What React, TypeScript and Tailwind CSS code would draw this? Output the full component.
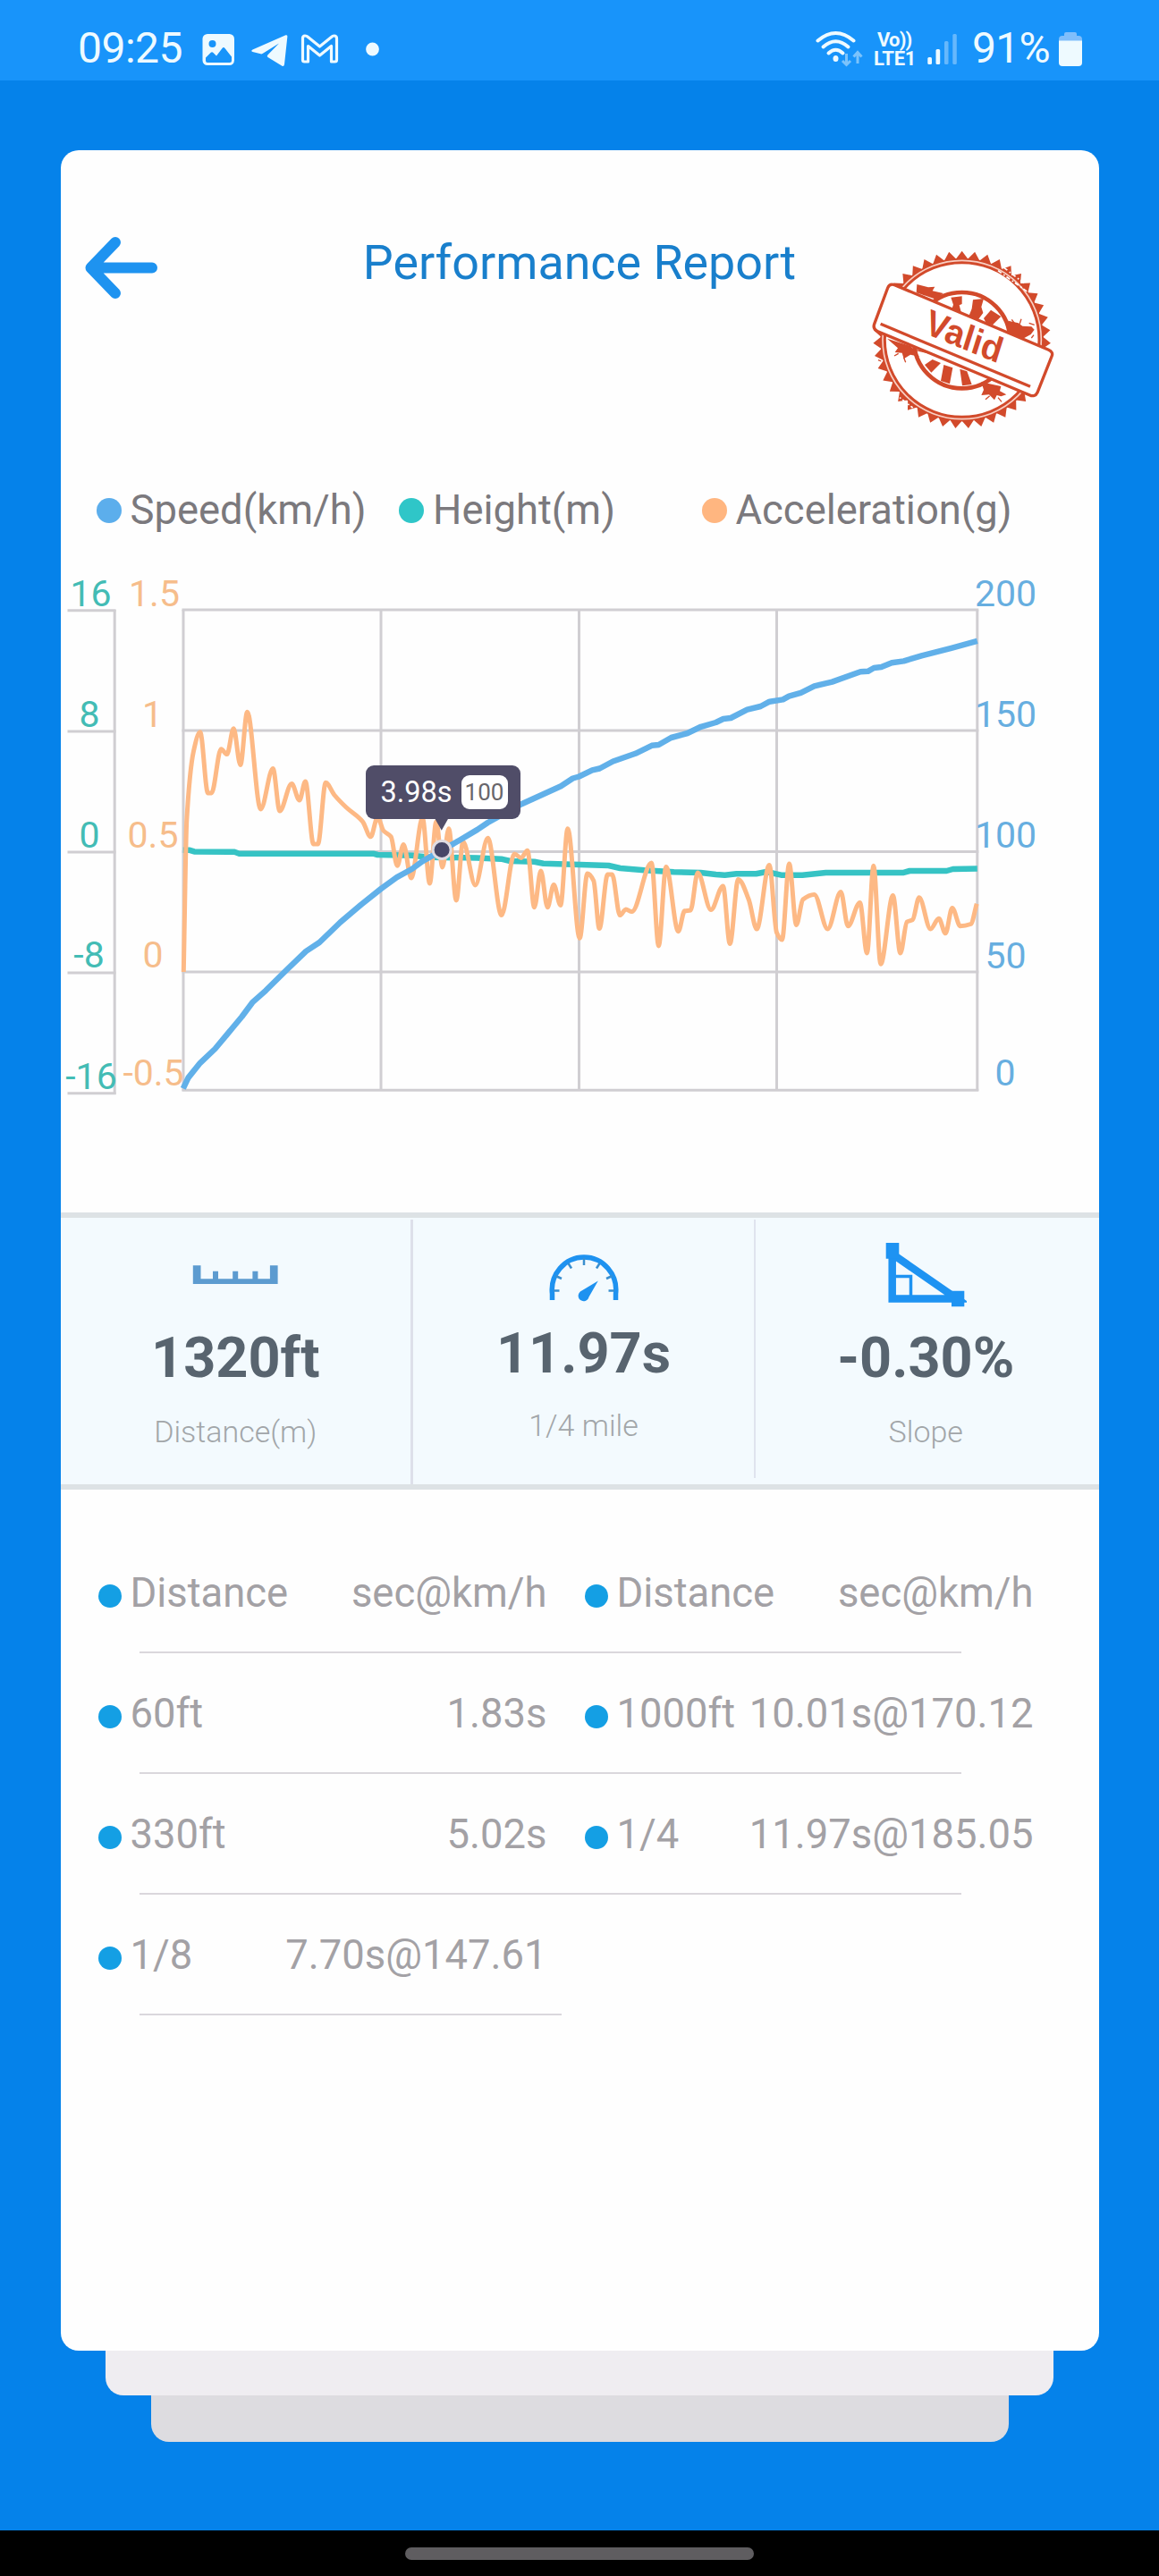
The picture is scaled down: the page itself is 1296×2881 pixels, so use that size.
type Point = [number, number];

type Split = { label: string; value: string };

const SPEED: Point[] = [
  [204.3, 1217.3], [210, 1205.4], [223.3, 1188.8], [240, 1173], [260, 1149], [270, 1137],
  [281.7, 1121.2], [296.7, 1107.8], [320, 1084.8], [341.7, 1063.9], [356.7, 1054], [380, 1031.5],
  [403.3, 1011.7], [425.7, 993.9], [443.3, 981.2], [460, 972], [471.7, 963.4], [493.3, 951.2],
  [513.3, 939.7], [533.3, 927.9], [545, 920], [583.3, 899], [626.7, 879.2], [640, 870.5],
  [647, 868.5], [661.7, 861.4], [670, 859.5], [685, 851.5], [710, 842.8], [728.3, 833.8],
  [736, 833], [750, 825], [768.3, 820], [783.3, 812.8], [800, 808], [808.3, 804],
  [816.7, 803], [835, 793.7], [850, 790], [860, 784.7], [875, 782.4], [881.7, 778.6],
  [895, 774.8], [910, 767.3], [930, 762.6], [961.7, 751.2], [970, 750.8], [976.7, 747],
  [985, 746], [996.7, 741.3], [1010, 739.4], [1030, 733.3], [1063.3, 724.8], [1092.3, 716.8],
];

const HEIGHT: Point[] = [
  [204.3, 950.8], [211.7, 950.8], [216.7, 952.4], [261.7, 952.8], [267, 954.7], [416.7, 954.7],
  [421.7, 956], [460, 956.7], [480, 958.7], [533, 959.5], [560, 960.7], [570, 963],
  [597, 963.8], [607, 965.8], [680, 968], [693, 971], [720, 973.3], [753, 975.3],
  [783, 976], [800, 978], [810, 978.7], [823, 977.3], [845, 977.3], [856.7, 975],
  [873, 978.7], [896.7, 978.7], [923, 975.9], [1010, 975.9], [1016.7, 974], [1058, 974],
  [1065, 972], [1092.3, 971.6],
];

const ACCELERATION: Point[] = [
  [204.8, 1087], [208.3, 917], [216, 840], [223.3, 818.7], [232, 887], [236, 887],
  [246.7, 837.7], [253.3, 843.6], [260.7, 814.8], [268.3, 855.5], [276, 796.2], [291, 905],
  [304.7, 859.5], [312.3, 907], [325.7, 876.5], [334.3, 895], [341, 874], [350, 944],
  [355, 944], [363.7, 875.3], [373.3, 889], [386.7, 903], [405, 918.8], [414, 935.8],
  [421.7, 914], [428.3, 929], [436.7, 935.8], [443.7, 968.2], [450.7, 944.5], [459.3, 982],
  [472, 915], [480, 988], [487.3, 919], [494.3, 970], [501.3, 926.7], [509.7, 1007],
  [517.3, 941.3], [531, 990], [545, 937.3], [560.3, 1023.6], [574.7, 955], [582.3, 959.5],
  [589.3, 951.2], [597, 1014.8], [604.3, 974], [611.7, 1014.8], [618.7, 989.5], [626.3, 1012.5],
  [634.3, 926.7], [647.7, 1049.3], [656.3, 977], [663.3, 985], [669.7, 1038.6], [679, 978],
  [684, 978], [692.7, 1023.6], [699.3, 1017], [706, 1019.6], [728, 965], [736, 1058],
  [744.3, 969.4], [758, 1041.7], [765, 1018.8], [771.7, 1018], [779.7, 976], [794.5, 1017.5],
  [808, 991], [815.7, 1055.6], [825, 983.4], [836.7, 1006], [845.7, 1039], [859.7, 967.4],
  [868, 1043], [874, 1051], [882, 966], [890, 1034.4], [897.3, 1006], [910, 1000.4],
  [925, 1039], [939.7, 997.6], [947.7, 1035.8], [961, 1009.4], [969, 1066], [976.3, 968.3],
  [984.3, 1078.3], [998, 1001.4], [1006.3, 1066], [1013.7, 1031], [1020, 1028.7], [1027.3, 1003.7],
  [1040, 1039], [1049.3, 1027.3], [1056.7, 1043.8], [1064.3, 1015.5], [1073.3, 1035.8], [1085, 1033.5],
  [1091.7, 1010.8],
];

const GRID_X = [204.5, 425.5, 647, 868, 1092.3];
const GRID_Y = [682, 817, 952.4, 1087, 1219.3];
const SIDE_Y = [682.7, 818, 953, 1088, 1222.8];

const HEIGHT_TICKS = [
  { text: "16", x: 101, y: 678 },
  { text: "8", x: 99.5, y: 812.5 },
  { text: "0", x: 99.5, y: 947.6 },
  { text: "-8", x: 99, y: 1082 },
  { text: "-16", x: 101.5, y: 1217.7 },
];

const ACCELERATION_TICKS = [
  { text: "1.5", x: 172, y: 678 },
  { text: "1", x: 170, y: 812.5 },
  { text: "0.5", x: 170.5, y: 947.6 },
  { text: "0", x: 170.5, y: 1082 },
  { text: "-0.5", x: 171, y: 1213.7 },
];

const SPEED_TICKS = [
  { text: "200", x: 1124, y: 677.6 },
  { text: "150", x: 1124, y: 812.6 },
  { text: "100", x: 1124, y: 948 },
  { text: "50", x: 1124, y: 1082.5 },
  { text: "0", x: 1123.5, y: 1213.7 },
];

const SPLITS: [Split, Split?][] = [
  [{ label: "Distance", value: "sec@km/h" }, { label: "Distance", value: "sec@km/h" }],
  [{ label: "60ft", value: "1.83s" }, { label: "1000ft", value: "10.01s@170.12" }],
  [{ label: "330ft", value: "5.02s" }, { label: "1/4", value: "11.97s@185.05" }],
  [{ label: "1/8", value: "7.70s@147.61" }],
];

const toLine = (points: Point[]) => "M" + points.map((p) => p.join(" ")).join("L");

/** Monotone cubic through the samples: flat at every peak and trough. */
function toCurve(points: Point[]) {
  const slope = (a: Point, b: Point) => (b[1] - a[1]) / (b[0] - a[0]);
  const tangents = points.map((p, i) => {
    if (i === 0) return slope(p, points[1]);
    if (i === points.length - 1) return slope(points[i - 1], p);
    const before = slope(points[i - 1], p);
    const after = slope(p, points[i + 1]);
    return before * after <= 0 ? 0 : (2 * before * after) / (before + after);
  });
  let d = `M${points[0][0]} ${points[0][1]}`;
  for (let i = 1; i < points.length; i++) {
    const [x0, y0] = points[i - 1];
    const [x1, y1] = points[i];
    const h = (x1 - x0) / 3;
    d += `C${x0 + h} ${y0 + h * tangents[i - 1]} ${x1 - h} ${y1 - h * tangents[i]} ${x1} ${y1}`;
  }
  return d;
}

function toothedRing(cx: number, cy: number, inner: number, outer: number, teeth: number) {
  const points: string[] = [];
  for (let i = 0; i < teeth * 2; i++) {
    const r = i % 2 ? inner : outer;
    const a = (i * Math.PI) / teeth - Math.PI / 2;
    points.push(`${(cx + r * Math.cos(a)).toFixed(1)},${(cy + r * Math.sin(a)).toFixed(1)}`);
  }
  return points.join(" ");
}

function StatusBar() {
  return (
    <header className="flex h-[90px] shrink-0 items-start bg-[#1894fa] pt-[26px] pl-[87px] text-[48px] leading-[56px] text-[#eefaff]">
      <span className="w-[137px] tracking-[-0.5px]">09:25</span>
      <svg viewBox="226 32 200 46" className="mt-1.5 ml-0.5 h-[46px] w-[200px]">
        <rect x="226.5" y="38" width="35.5" height="35" rx="5.5" fill="currentColor" />
        <circle cx="237.5" cy="49" r="4" fill="#1894fa" />
        <path
          d="M230 64.5l5.5-5.5q1.5-1.5 3 0l3.5 3.5l6.5-8.5q1.5-2 3 0l7.5 9.5V68q0 2-2 2H232q-2 0-2-2z"
          fill="#1894fa"
        />
        <path
          d="M282.5 55.5L319.5 39.3q2-.6 1.9 1.5L318 72q-.5 3-3 1.5L299.5 64q-1.5-1-.2-2.5L312 48.5L293.5 60q-1 .6-2 .3L282.5 58q-2.5-1 0-2.5z"
          fill="currentColor"
        />
        <path
          d="M338.5 42v25q0 2 2 2h4V51.5L357.5 62L370.5 51.5V69h4q2 0 2-2V43q0-3-3-3q-1.5 0-3 1.5L357.5 52L344.5 41.5Q343 40 341 40q-2.5 0-2.5 3z"
          fill="none"
          stroke="currentColor"
          strokeWidth="3.2"
          strokeLinejoin="round"
        />
        <circle cx="416.5" cy="55" r="7.4" fill="currentColor" />
      </svg>
      <svg viewBox="910 32 56 46" className="mt-1.5 ml-[484px] h-[46px] w-[56px]">
        <g fill="none" stroke="currentColor" strokeWidth="4" strokeLinecap="round">
          <path d="M914.5 45.5Q934.5 28.5 954.5 45.5" />
          <path d="M920.5 52.5Q934.5 40 948.5 52.5" />
          <path d="M926.5 59.5Q934.5 52 942.5 59.5" />
        </g>
        <ellipse cx="934.5" cy="65.5" rx="3" ry="3.5" fill="currentColor" />
        <path
          d="M946.5 60v12M942 68l4.5 4.5L951 68M959 71V59M954.5 63.5L959 58.5L963.5 63.5"
          fill="none"
          stroke="#7cc3fb"
          strokeWidth="3"
        />
      </svg>
      <div className="ml-[11px] flex w-[49px] flex-col pt-[8px] text-[22px] leading-[21px] font-bold">
        <span className="pl-1 tracking-[-0.8px] whitespace-nowrap">Vo))</span>
        <span className="tracking-[-0.2px]">LTE1</span>
      </div>
      <svg viewBox="1036 36 36 38" className="mt-[10px] ml-[10px] h-[38px] w-[36px]">
        <rect x="1037.3" y="64" width="4.7" height="8" rx="1.5" fill="currentColor" />
        <rect x="1046.5" y="55" width="4.7" height="17" rx="1.5" fill="currentColor" />
        <rect x="1056" y="46" width="4.5" height="26" rx="1.5" fill="#66b8fc" />
        <rect x="1065.3" y="38" width="4.5" height="34" rx="1.5" fill="#66b8fc" />
      </svg>
      <span className="ml-[15px] w-[97px] tracking-[-0.7px]">91%</span>
      <svg viewBox="1184 36 26 38" className="mt-[10px] h-[38px] w-[26px]">
        <path d="M1190 40v-2q0-2 2-2h10q2 0 2 2v2h2q4 0 4 4v4h-26v-4q0-4 4-4z" fill="#7fbefb" />
        <path d="M1184 45.5h26V70q0 4-4 4h-18q-4 0-4-4z" fill="currentColor" />
      </svg>
    </header>
  );
}

function ValidStamp() {
  return (
    <svg viewBox="0 0 780 750" className="mt-[82px] h-[250px] w-[260px]">
      <polygon points={toothedRing(407, 390, 272, 298, 43)} fill="#d24a2b" />
      <circle cx="407" cy="390" r="271" fill="#f9cfc3" stroke="#d24a2b" strokeWidth="5" />
      <circle cx="407" cy="390" r="259" fill="#fff" stroke="#d24a2b" strokeWidth="9" />
      <path d="M528 158l100 72M548 148l72 56M180 570l62 48" stroke="#fff" strokeWidth="5" strokeDasharray="14 9 5 7" />
      <circle cx="407" cy="392" r="161" fill="none" stroke="#d24a2b" strokeWidth="14" />
      <g fill="#d24a2b">
        <path d="M370 248l37-4v26l-9 4l8 30l-34-14l6-18zM444 256l36-4l-8 28l6 20l-18 24l-32-8l12-30zM504 290l34 22l-28 28l-22-6l-8-16z" />
        <path d="M282 474l26-18l28 12l-32 32zM346 474l30 10l-10 54l-30-10zM400 488l24 8l16 44l-32 4z" />
        <path d="M256 204l38 10l22-2l-8 14l36 8l-24 20l-66-22zM562 326l34 8l14 10l30 2l10 10l-12 16l-26 14l-54-22z" />
        <path d="M156 386l80 26l28 34l-30-6l-22 14l-6-20l-24-2l10-14zM472 532l66 14l-4 16l22 12l-18 6l-14-4l-8 16l-18-18l-26 2l8-18z" />
      </g>
      <path
        d="M574 322l10 14M606 320l-6 18M632 334l18 6M640 384l8-10M262 226l20 14M180 444l14-8M212 450l6 16M250 424l62 14M486 590l14-12M540 598l-12-14M126 458l10 4M158 520l8 6"
        stroke="#d24a2b"
        strokeWidth="4"
      />
      <path
        d="M181 206L696 423Q715 431 708 446L660 567Q652 584 633 575L125 362Q107 354 113 337L158 216Q164 200 181 206z"
        fill="#fff"
        stroke="#d24a2b"
        strokeWidth="10"
      />
      <path d="M134 337L636 547" stroke="#d24a2b" strokeWidth="10" />
      <text
        transform="translate(277 366) rotate(22.5) skewX(5)"
        textLength="272"
        lengthAdjust="spacingAndGlyphs"
        className="fill-[#d24a2b] font-['Liberation_Sans',sans-serif] text-[120px] font-bold"
      >
        Valid
      </text>
    </svg>
  );
}

function ReportHeader() {
  return (
    <div className="grid h-[374px] grid-cols-[260px_1fr_260px] px-[28.5px]">
      <svg viewBox="94 260 84 80" className="mt-[92px] -ml-0.5 h-[80px] w-[84px]">
        <path
          d="M170 299.5H103M129 271L101.5 299.5L129 328"
          fill="none"
          stroke="#1e93f0"
          strokeWidth="12"
          strokeLinecap="round"
          strokeLinejoin="round"
        />
      </svg>
      <h1 className="mt-[94px] text-center text-[53.8px] leading-[64px] whitespace-nowrap text-[#197fcc]">
        Performance Report
      </h1>
      <ValidStamp />
    </div>
  );
}

function Legend() {
  return (
    <ul className="grid h-[58px] grid-cols-[338.5px_338.5px_auto] pl-[40px] text-[45.4px] leading-[54px] text-[#7b797d]">
      <li className="flex items-center gap-[10px]">
        <span className="size-[28px] rounded-full bg-[#5caeec]" />
        Speed(km/h)
      </li>
      <li className="flex items-center gap-[10px]">
        <span className="size-[28px] rounded-full bg-[#2fc6c8]" />
        Height(m)
      </li>
      <li className="flex items-center gap-[10px]">
        <span className="size-[28px] rounded-full bg-[#ffb680]" />
        Acceleration(g)
      </li>
    </ul>
  );
}

function Chart() {
  return (
    <div className="relative h-[756px]">
      <svg viewBox="67.5 600 1161 756" className="h-[756px] w-[1161px] text-[41px]">
        <g stroke="#d0ced2" strokeWidth="3">
          {SIDE_Y.map((y) => (
            <path key={y} d={`M75 ${y}H129`} />
          ))}
          <path d="M127.7 682V1224" />
          {GRID_Y.map((y) => (
            <path key={y} d={`M203 ${y}H1093.8`} />
          ))}
          {GRID_X.map((x) => (
            <path key={x} d={`M${x} 682V1220`} />
          ))}
        </g>
        <g textAnchor="middle" fill="#43bcb5">
          {HEIGHT_TICKS.map((t) => (
            <text key={t.text} x={t.x} y={t.y}>{t.text}</text>
          ))}
        </g>
        <g textAnchor="middle" fill="#f6bd8b">
          {ACCELERATION_TICKS.map((t) => (
            <text key={t.text} x={t.x} y={t.y}>{t.text}</text>
          ))}
        </g>
        <g textAnchor="middle" fill="#67aee0">
          {SPEED_TICKS.map((t) => (
            <text key={t.text} x={t.x} y={t.y}>{t.text}</text>
          ))}
        </g>
        <g fill="none" strokeLinejoin="round">
          <path d={toLine(HEIGHT)} stroke="#36c3c4" strokeWidth="6.5" />
          <path d={toCurve(ACCELERATION)} stroke="#fdb985" strokeWidth="5" />
          <path d={toLine(SPEED)} stroke="#61b0e9" strokeWidth="6.5" />
        </g>
        <path d="M485.5 915H501L493.3 928.7z" fill="#504d68" />
        <circle cx="493.6" cy="950.4" r="10" fill="#474767" stroke="#dfdce2" strokeWidth="3" />
      </svg>
      <div className="absolute top-[256px] left-[341px] flex h-[60px] w-[173px] items-center rounded-[9px] bg-[#504d68] pl-[17px] text-[32.5px] text-white">
        <span className="w-[90px]">3.98s</span>
        <span className="mb-px flex h-[38px] w-[52px] items-center justify-center rounded-[9px] bg-white text-[26px] leading-none text-[#68666b]">
          100
        </span>
      </div>
    </div>
  );
}

const RulerIcon = () => (
  <svg viewBox="215 1414 96 24" className="h-[24px] w-[96px]">
    <path
      d="M215.8 1415.3h8.7v15h13.5v-8.6h6v8.6h16.2v-8.6h6v8.6h16.2v-8.6h6v8.6h13.5v-15h8.7v20.7h-94.8z"
      fill="#5c9bd0"
    />
  </svg>
);

const GaugeIcon = () => (
  <svg viewBox="612 1402 80 54" className="h-[54px] w-[80px]">
    <path
      d="M616.5 1454V1447C614 1426 630 1406 652 1406S690 1426 687.5 1447V1454"
      fill="none"
      stroke="#1e92f0"
      strokeWidth="5.5"
    />
    <path
      d="M618 1443.5h6.5M620.5 1427l6.5 3M634.5 1413l3.5 5.5M652 1407v8M669.5 1413l-3.5 5.5M683.5 1427l-6.5 3M686 1443.5h-6.5"
      stroke="#3a8fcf"
      strokeWidth="2.5"
    />
    <path d="M667.8 1432.5L657.5 1450.5A6 6 0 1 1 649.5 1443.6z" fill="#1e92f0" />
  </svg>
);

const SlopeIcon = () => (
  <svg viewBox="990 1388 92 76" className="h-[76px] w-[92px]">
    <path d="M1001 1404L1071 1452.5H998.7V1402" fill="none" stroke="#1e93f2" strokeWidth="8.5" />
    <path d="M1002 1427.5H1019.5V1449" fill="none" stroke="#1e93f2" strokeWidth="3.5" />
    <path d="M991.7 1390h14.6v17.7h-14.6zM1065 1443.7h14.3v17.6h-14.3z" fill="#1e93f2" />
  </svg>
);

function Stats() {
  return (
    <section className="grid h-[310px] grid-cols-[394.5px_383px_1fr] border-y-[6px] border-[#dde2e5] bg-[#f3fafe] text-center">
      <div className="mt-0.5 flex flex-col items-center border-r-[3px] border-[#dde0ea]">
        <div className="mt-[50px]">
          <RulerIcon />
        </div>
        <strong className="mt-[43px] text-[63px] leading-[76px] font-bold text-[#58646f]">1320ft</strong>
        <span className="mt-[24px] text-[34px] leading-[40px] font-light text-[#a2a6a9]">Distance(m)</span>
      </div>
      <div className="mt-0.5 mb-[7px] flex flex-col items-center border-r-2 border-[#dfe3ee]">
        <div className="mt-[38px]">
          <GaugeIcon />
        </div>
        <strong className="mt-[20px] text-[63px] leading-[76px] font-bold text-[#58646f]">11.97s</strong>
        <span className="mt-[22px] text-[34px] leading-[40px] font-light text-[#a2a6a9]">1/4 mile</span>
      </div>
      <div className="mt-0.5 flex flex-col items-center pr-[3px]">
        <div className="mt-[24px]">
          <SlopeIcon />
        </div>
        <strong className="mt-[17px] text-[63px] leading-[76px] font-bold text-[#58646f]">-0.30%</strong>
        <span className="mt-[24px] text-[34px] leading-[40px] font-light text-[#a2a6a9]">Slope</span>
      </div>
    </section>
  );
}

function SplitCell({ label, value }: Split) {
  return (
    <div className="flex w-[502px] items-center whitespace-nowrap">
      <span className="mt-[7px] mr-[10px] size-[26px] rounded-full bg-[#149fe4]" />
      <span>{label}</span>
      <span className="ml-auto">{value}</span>
    </div>
  );
}

function SplitTable() {
  return (
    <section className="pt-[48px] text-[45.4px] leading-[54px] text-[#a3a1a5]">
      {SPLITS.map(([left, right]) => (
        <div key={left.label}>
          <div className="flex h-[133px] gap-[42px] pt-0.5 pl-[42px]">
            <SplitCell {...left} />
            {right && <SplitCell {...right} />}
          </div>
          <div className={right ? "ml-[88px] h-[2px] w-[919px] bg-[#dad7dc]" : "ml-[88px] h-[2px] w-[472px] bg-[#dad7dc]"} />
        </div>
      ))}
    </section>
  );
}

export default function App() {
  return (
    <div className="flex h-[2881px] w-[1296px] flex-col overflow-hidden bg-[#0582ea] font-['Roboto',sans-serif]">
      <StatusBar />
      <main className="flex flex-1 flex-col items-center pt-[78px]">
        <article className="h-[2461px] w-[1161px] overflow-hidden rounded-[20px] bg-[#fefefe]">
          <ReportHeader />
          <Legend />
          <Chart />
          <Stats />
          <SplitTable />
        </article>
        <div className="h-[50px] w-[1060px] rounded-b-[20px] bg-[#efedf1]" />
        <div className="h-[52px] w-[959px] rounded-b-[20px] bg-[#dddce0]" />
      </main>
      <footer className="flex h-[51px] shrink-0 items-center justify-center bg-black">
        <div className="h-[14px] w-[390px] rounded-full bg-[#5f5d60]" />
      </footer>
    </div>
  );
}
